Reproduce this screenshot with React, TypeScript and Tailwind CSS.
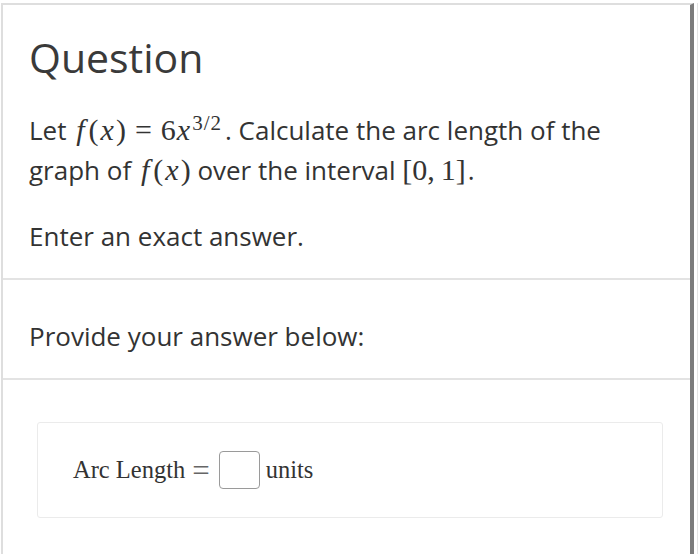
import type { ReactNode } from 'react'

const serif = { fontFamily: '"Liberation Serif", "Times New Roman", serif' }

export default function App() {
  const sans = { fontFamily: '"Open Sans", "Noto Sans", Arial, sans-serif' }
  return (
    <div className="relative h-[554px] w-[700px] overflow-hidden bg-white">
      <div className="flex h-full pl-[1px] pt-[3px]">
        {/* card */}
        <div
          className="flex h-[560px] w-[693px] flex-col border-l-2 border-t-2 border-r-4 border-l-[#dedede] border-t-[#dedede] border-r-[#7c7c7c] text-[#333]"
          style={sans}
        >
          {/* question */}
          <section className="px-[26px] pb-[22px] pt-[24px]">
            <h1 className="text-[41px] font-normal leading-[56px] text-[#3a3a3a]">Question</h1>
            <p className="mt-[25px] text-[26px] leading-[40px]">
              Let <Fx />
              <Math>
                <span className="mx-[9px]">=</span>6<i className="ml-[1px]">x</i>
                <sup className="ml-[2px] text-[21px] tracking-[1px]">3/2</sup>
              </Math>
              <span className="ml-[3px]">. Calculate the arc length of the</span>
              <br />
              graph of <Fx /> over the interval{' '}
              <Math>
                <span>[0,</span>
                <span className="ml-[6px]">1]</span>
              </Math>
              <span className="ml-[2px]">.</span>
            </p>
            <p className="mt-[26px] text-[26px] leading-[40px]">Enter an exact answer.</p>
          </section>

          <section className="border-t-2 border-[#e3e3e3] px-[26px] pb-[22px] pt-[36px]">
            <p className="text-[26px] leading-[40px]">Provide your answer below:</p>
          </section>

          <section className="border-t-2 border-[#e3e3e3] pl-[34px] pt-[42px]">
            <div className="flex h-[96px] w-[626px] items-center rounded-[3px] border border-[#ebebeb] pl-[35px]">
              <div className="flex items-center text-[24.5px] text-[#333]" style={serif}>
                <span>Arc Length</span>
                <span className="ml-[7px] text-[31px] leading-none text-[#666]">=</span>
                <span className="ml-[9px] inline-block h-[38px] w-[41px] rounded-[4px] border-[1.5px] border-[#9a9a9a]" />
                <span className="ml-[6px]">units</span>
              </div>
            </div>
          </section>
        </div>
        <div className="ml-[3px] h-full w-px bg-[#e4e4e4]" />
      </div>
    </div>
  )
}

function Math({ children }: { children: ReactNode }) {
  return (
    <span className="text-[30px]" style={serif}>
      {children}
    </span>
  )
}

function Fx() {
  return (
    <Math>
      <i className="ml-[3px] mr-[4px]">f</i>(<i className="mx-[2px]">x</i>)
    </Math>
  )
}
